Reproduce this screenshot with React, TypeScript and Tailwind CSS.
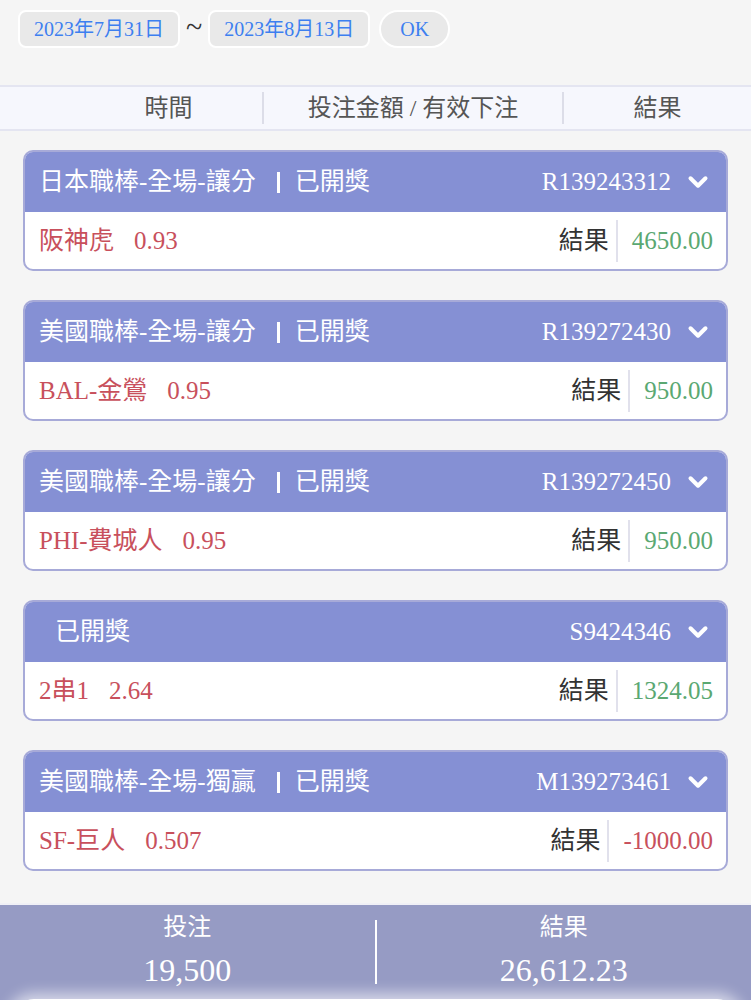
import { ChevronDown } from "lucide-react";

type Bet = {
  category: string;
  id: string;
  pick: string;
  odds: string;
  result: string;
  win: boolean;
};

const bets: Bet[] = [
  { category: "日本職棒-全場-讓分", id: "R139243312", pick: "阪神虎", odds: "0.93", result: "4650.00", win: true },
  { category: "美國職棒-全場-讓分", id: "R139272430", pick: "BAL-金鶯", odds: "0.95", result: "950.00", win: true },
  { category: "美國職棒-全場-讓分", id: "R139272450", pick: "PHI-費城人", odds: "0.95", result: "950.00", win: true },
  { category: "", id: "S9424346", pick: "2串1", odds: "2.64", result: "1324.05", win: true },
  { category: "美國職棒-全場-獨贏", id: "M139273461", pick: "SF-巨人", odds: "0.507", result: "-1000.00", win: false },
];

function BetCard({ bet }: { bet: Bet }) {
  return (
    <div className="rounded-[10px] border-2 border-[#a7aad8] overflow-hidden bg-white">
      {/* header */}
      <div className="h-[60px] bg-[#8590d4] text-white flex items-center pl-[14px] pr-[13px] text-[25px]">
        {bet.category ? (
          <>
            <span>{bet.category}</span>
            <span className="w-[3px] h-[21px] bg-white ml-[21px] mr-[15px]" />
          </>
        ) : (
          <span className="w-4" />
        )}
        <span>已開獎</span>
        <span className="ml-auto">{bet.id}</span>
        <ChevronDown className="ml-[12px]" size={30} strokeWidth={3.2} />
      </div>
      {/* body */}
      <div className="h-[57px] flex items-center pl-[14px] pr-[13px] text-[25px]">
        <span className="text-[#c8505c]">{bet.pick}</span>
        <span className="text-[#c8505c] ml-[20px]">{bet.odds}</span>
        <span className="ml-auto text-[#333]">結果</span>
        <span className="w-[2px] h-[42px] bg-[#e1e1ec] ml-[7px] mr-[14px]" />
        <span className={bet.win ? "text-[#5aa872]" : "text-[#c8505c]"}>{bet.result}</span>
      </div>
    </div>
  );
}

export default function App() {
  return (
    <div className="min-h-screen bg-[#f5f5f5] font-['Liberation_Serif','Noto_Sans_CJK_TC',serif] overflow-hidden">
      {/* Date range */}
      <div className="flex items-center pt-[10px] pl-[18px]">
        <div className="h-[38px] px-[14px] flex items-center rounded-[8px] bg-[#e9e9e9] border-2 border-white text-[#3d7ff0] text-[20px]">
          2023年7月31日
        </div>
        <span className="mx-[6px] text-[30px] leading-[30px] text-[#333] -mt-[4px]">~</span>
        <div className="h-[38px] px-[14px] flex items-center rounded-[8px] bg-[#e9e9e9] border-2 border-white text-[#3d7ff0] text-[20px]">
          2023年8月13日
        </div>
        <div className="ml-[9px] h-[38px] w-[71px] flex items-center justify-center rounded-full bg-[#e9e9e9] border-2 border-white text-[#3d7ff0] text-[20px]">
          OK
        </div>
      </div>

      {/* Column header */}
      <div className="mt-[37px] h-[46px] bg-[#f6f7fd] border-y-2 border-[#e4e5f1] grid grid-cols-[75px_187px_300px_1fr] items-center text-[24px] text-[#555]">
        <div />
        <div className="text-center">時間</div>
        <div className="text-center border-l-2 border-[#dcdde8] h-[32px] leading-[32px]">投注金額 / 有效下注</div>
        <div className="text-center border-l-2 border-[#dcdde8] h-[32px] leading-[32px]">結果</div>
      </div>

      {/* Bet list */}
      <div className="flex flex-col gap-[29px] px-[23px] pt-[19px]">
        {bets.map((b) => (
          <BetCard key={b.id} bet={b} />
        ))}
      </div>

      {/* Summary */}
      <div className="mt-[32px] border-t-2 border-[#f0f0f6] bg-[#969bc4] text-white">
        <div className="grid grid-cols-[1fr_2px_1fr] items-center pt-[6px] pb-[6px]">
          <div className="flex flex-col items-center">
            <span className="text-[24px] leading-[32px]">投注</span>
            <span className="text-[32px] leading-[46px] mt-[4px]">19,500</span>
          </div>
          <div className="h-[64px] bg-white" />
          <div className="flex flex-col items-center">
            <span className="text-[24px] leading-[32px]">結果</span>
            <span className="text-[32px] leading-[46px] mt-[4px]">26,612.23</span>
          </div>
        </div>
        <div className="mx-[12px] h-[80px] bg-white rounded-t-[22px] shadow-[0_0_14px_6px_rgba(255,255,255,0.6)]" />
      </div>
    </div>
  );
}
